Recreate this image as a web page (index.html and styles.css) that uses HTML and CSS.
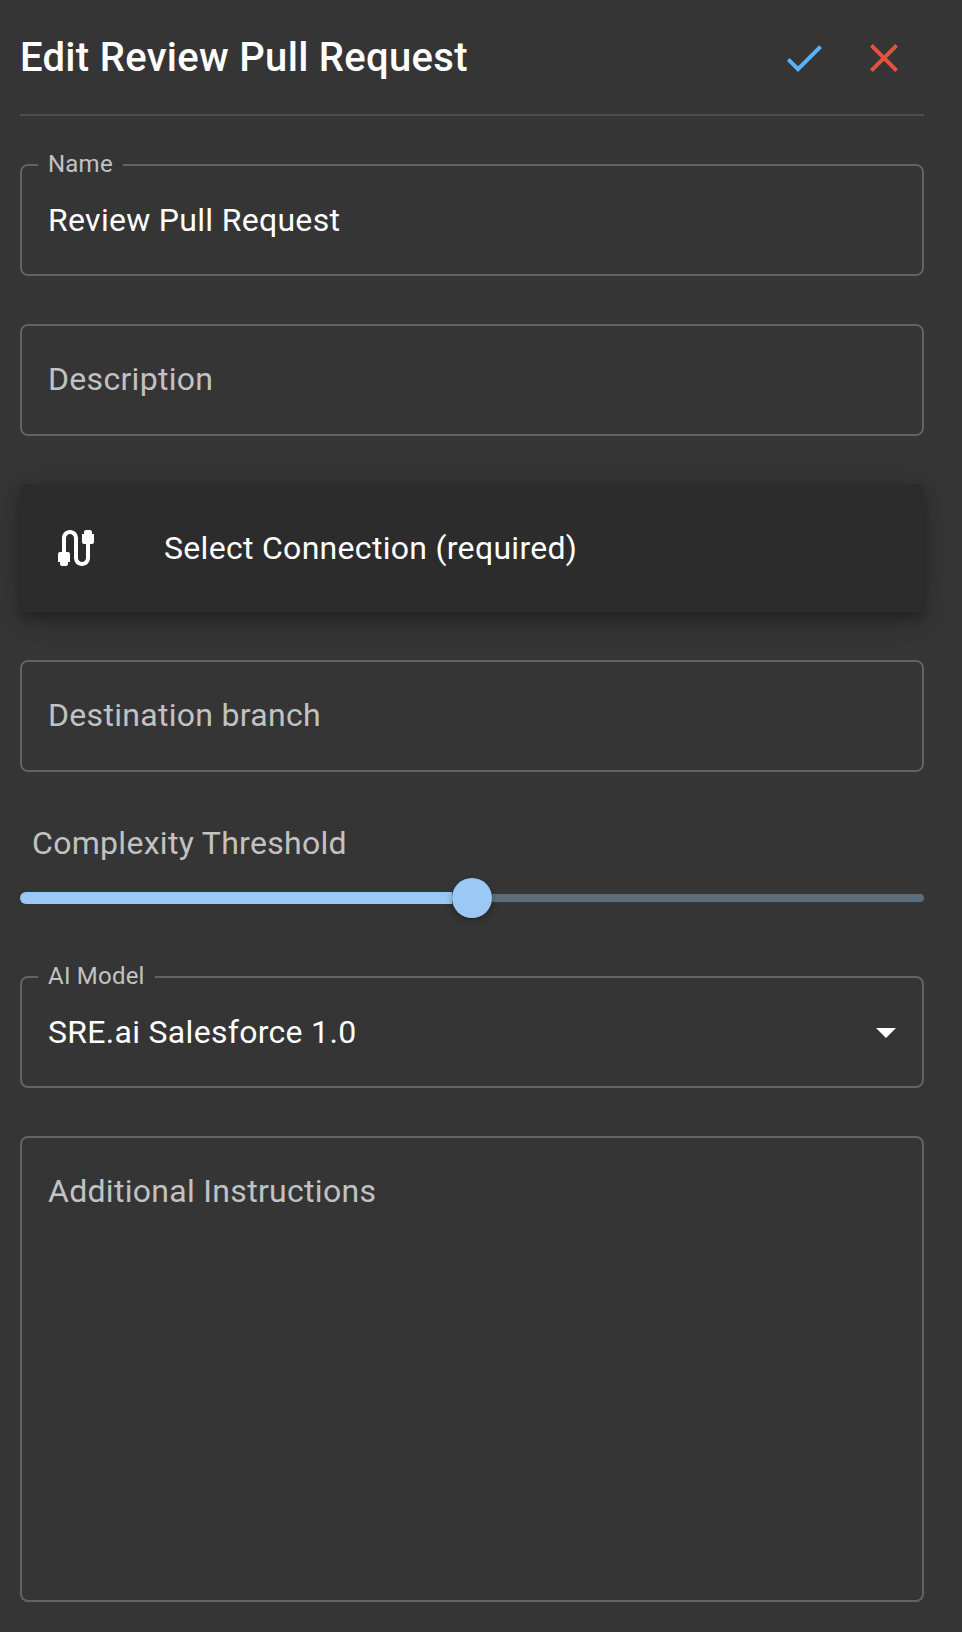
FILE: index.html
```html
<!DOCTYPE html>
<html lang="en">
<head>
<meta charset="utf-8">
<title>Edit Review Pull Request</title>
<link rel="stylesheet" href="styles.css">
</head>
<body>
<main class="panel">
  <header class="header">
    <h1 class="title">Edit Review Pull Request</h1>
    <div class="actions">
      <svg class="icon confirm" viewBox="0 0 24 24"><path d="M9 16.17 4.83 12l-1.42 1.41L9 19 21 7l-1.41-1.41z"/></svg>
      <svg class="icon cancel" viewBox="0 0 24 24"><path d="M19 6.41 17.59 5 12 10.59 6.41 5 5 6.41 10.59 12 5 17.59 6.41 19 12 13.41 17.59 19 19 17.59 13.41 12z"/></svg>
    </div>
  </header>

  <fieldset class="field labelled">
    <legend class="legend">Name</legend>
    <div class="value">Review Pull Request</div>
  </fieldset>

  <div class="field"><div class="placeholder">Description</div></div>

  <div class="connection">
    <svg class="icon" viewBox="0 0 24 24"><path d="M20 5V4c0-.55-.45-1-1-1h-2c-.55 0-1 .45-1 1v1h-1v4c0 .55.45 1 1 1h1v7c0 1.1-.9 2-2 2s-2-.9-2-2V7c0-2.21-1.79-4-4-4S5 4.79 5 7v7H4c-.55 0-1 .45-1 1v4h1v1c0 .55.45 1 1 1h2c.55 0 1-.45 1-1v-1h1v-4c0-.55-.45-1-1-1H7V7c0-1.1.9-2 2-2s2 .9 2 2v10c0 2.21 1.79 4 4 4s4-1.79 4-4v-7h1c.55 0 1-.45 1-1V5h-1z"/></svg>
    <span>Select Connection (required)</span>
  </div>

  <div class="field"><div class="placeholder">Destination branch</div></div>

  <section class="threshold">
    <div class="threshold-label">Complexity Threshold</div>
    <div class="slider">
      <div class="track"></div>
      <div class="thumb"></div>
      <div class="rail"></div>
    </div>
  </section>

  <fieldset class="field labelled">
    <legend class="legend">AI Model</legend>
    <div class="select-row">
      <div class="value">SRE.ai Salesforce 1.0</div>
      <svg class="icon" viewBox="0 0 24 24"><path d="m7 10 5 5 5-5z"/></svg>
    </div>
  </fieldset>

  <div class="field instructions"><div class="placeholder">Additional Instructions</div></div>
</main>
</body>
</html>
```
FILE: styles.css
```css
* { box-sizing: border-box; }

body {
  margin: 0;
  background: #353535;
  color: #fff;
  font-family: Roboto, "Liberation Sans", sans-serif;
  font-size: 32px;
  line-height: 46px;
  letter-spacing: 0.3px;
}

.panel {
  display: flex;
  flex-direction: column;
  gap: 48px;
  width: 962px;
  height: 1632px;
  padding: 0 38px 0 20px;
}

.header {
  display: flex;
  justify-content: space-between;
  align-items: center;
  flex: none;
  height: 116px;
  padding: 2px 16px 0 0;
  border-bottom: 2px solid #4d4d4d;
}

.title {
  margin: 0;
  font-size: 40px;
  font-weight: 500;
  line-height: 64px;
}

.actions { display: flex; gap: 32px; }

.icon {
  display: block;
  flex: none;
  width: 48px;
  height: 48px;
  fill: currentColor;
}

.confirm { color: #5bb1f5; }
.cancel { color: #e5533f; }

.field {
  flex: none;
  height: 112px;
  min-width: 0;
  margin: 0;
  padding: 30px 26px;
  border: 2px solid #636363;
  border-radius: 8px;
}

/* The legend straddles the top border and opens its notch. */
.labelled {
  height: 125px;
  margin-top: -13px;
  padding: 0 12px 0 16px;
}

.legend {
  height: 28px;
  padding: 0 10px 2px;
  color: #c2c2c2;
  font-size: 24px;
  line-height: 26px;
  letter-spacing: 0.22px;
}

.value { padding: 18px 0 0 10px; }
.placeholder { color: #c2c2c2; }

.select-row { display: flex; justify-content: space-between; }
.select-row .icon { margin-top: 17px; }

.connection {
  display: flex;
  align-items: center;
  flex: none;
  gap: 64px;
  height: 128px;
  padding: 0 32px;
  border-radius: 8px;
  background: #2c2c2c;
  box-shadow: 0 6px 10px -2px rgba(0, 0, 0, .2), 0 12px 20px rgba(0, 0, 0, .14), 0 2px 36px rgba(0, 0, 0, .12);
}

.threshold {
  flex: none;
  height: 108px;
}

.threshold-label {
  padding-left: 12px;
  color: #c2c2c2;
}

.slider {
  display: flex;
  align-items: center;
  height: 40px;
  margin-top: 12px;
}

.track {
  flex: 1;
  height: 12px;
  border-radius: 6px 0 0 6px;
  background: #9cc8f5;
}

.thumb {
  z-index: 1;
  width: 40px;
  height: 40px;
  border-radius: 50%;
  background: #9cc8f5;
  box-shadow: 0 2px 4px rgba(0, 0, 0, .25), 0 2px 8px rgba(0, 0, 0, .14);
}

.rail {
  flex: 1;
  height: 8px;
  border-radius: 0 4px 4px 0;
  background: #5c6d7e;
}

.instructions { height: 466px; }
```
